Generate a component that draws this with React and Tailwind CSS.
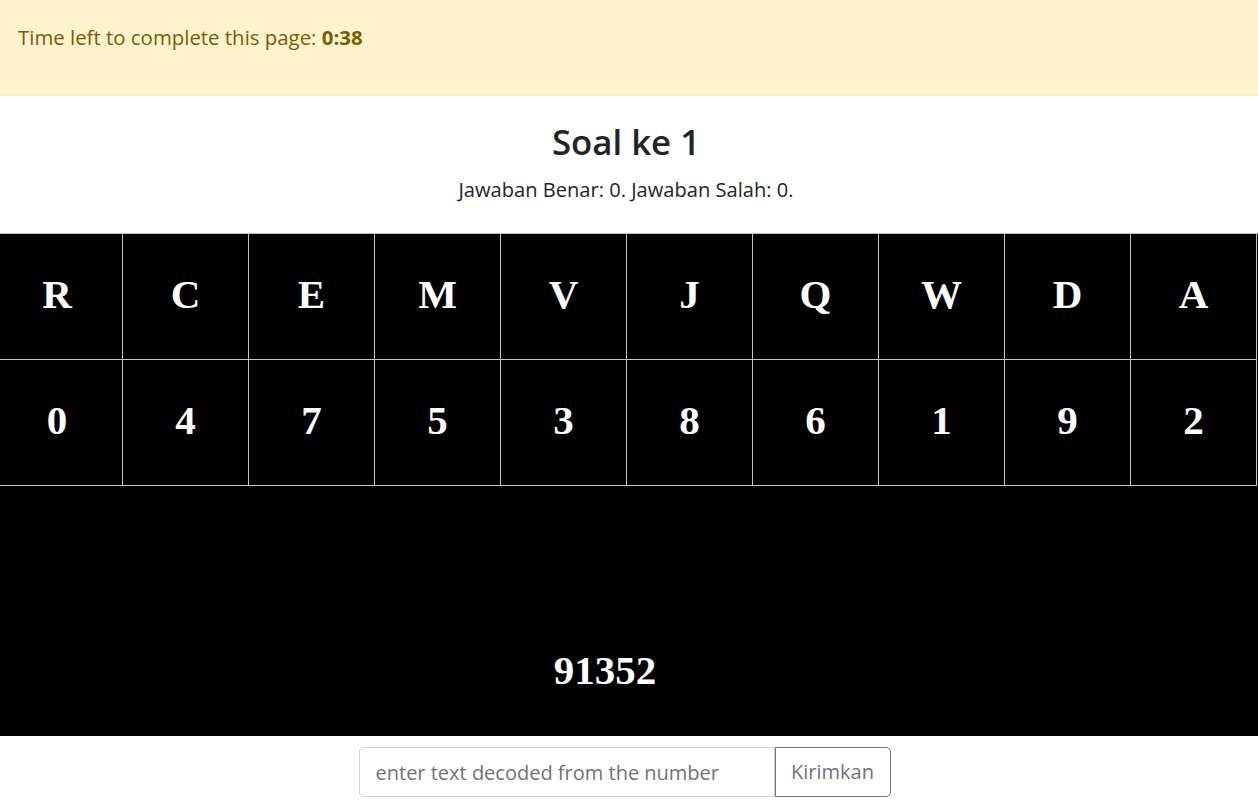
import React from "react";

const letters = ["R", "C", "E", "M", "V", "J", "Q", "W", "D", "A"];
const numbers = ["0", "4", "7", "5", "3", "8", "6", "1", "9", "2"];

const sans = "font-['Open_Sans','Noto_Sans',sans-serif]";
const serif = "font-['Liberation_Serif','Times_New_Roman',serif]";

function Row({ items }) {
  return (
    <div className="grid grid-cols-[131px_repeat(9,126px)] -ml-[8px] w-[1265px] border-b border-[#c4c4c4]">
      {items.map((it, i) => (
        <div
          key={i}
          className={`h-[125px] flex items-center justify-center pb-[4px] border-r border-[#c4c4c4] text-white font-bold text-[41px] ${serif}`}
        >
          {it}
        </div>
      ))}
    </div>
  );
}

export default function App() {
  return (
    <div className={`w-[1258px] h-[812px] overflow-hidden bg-white ${sans}`}>
      {/* timer alert */}
      <div className="h-[96px] bg-[#fff3cd] border-b border-[#ffeeba] text-[#7a5c06] text-[20.4px] pl-[18px] pt-[22px]">
        Time left to complete this page: <b>0:38</b>
      </div>

      {/* header */}
      <div className="h-[137px] text-center text-[#212529] pr-[6px]">
        <h2 className="pt-[21px] text-[34.8px] leading-[50px] font-semibold">Soal ke 1</h2>
        <p className="mt-[11px] text-[20.1px] leading-[24px]">Jawaban Benar: 0. Jawaban Salah: 0.</p>
      </div>

      {/* cipher table */}
      <div className="bg-black border-t border-[#c4c4c4] overflow-hidden">
        <Row items={letters} />
        <Row items={numbers} />
        <div className="h-[125px]" />
        <div className={`h-[125px] flex items-center justify-center pr-[48px] pb-[6px] text-white font-bold text-[41px] ${serif}`}>
          91352
        </div>
      </div>

      {/* answer input */}
      <div className="flex justify-center pt-[11px]">
        <div className="flex h-[50px] mr-[9px]">
          <input
            className="w-[416px] h-full border border-[#ced4da] rounded-l-[5px] px-[16px] text-[20px] text-[#495057] placeholder:text-[#6c757d] outline-none"
            placeholder="enter text decoded from the number"
          />
          <button className="w-[116px] h-full border border-[#6c757d] rounded-r-[5px] text-[20px] text-[#6c757d] bg-white">
            Kirimkan
          </button>
        </div>
      </div>
    </div>
  );
}
